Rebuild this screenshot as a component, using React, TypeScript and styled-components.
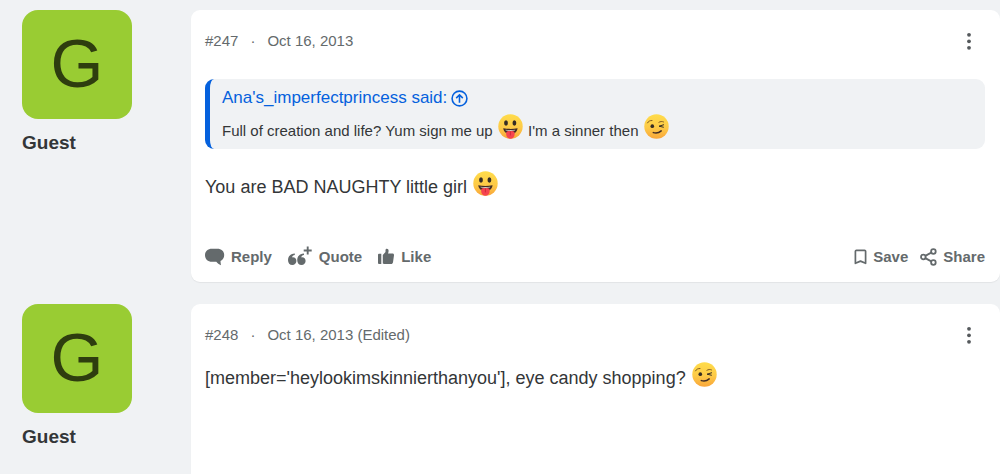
import React from "react";
import styled, { createGlobalStyle } from "styled-components";

const GlobalStyle = createGlobalStyle`
  * { box-sizing: border-box; }
  body {
    margin: 0;
    background: #f0f2f4;
    color: #333638;
    font-family: "Liberation Sans", Arial, sans-serif;
  }
`;

const Thread = styled.main`
  display: flex;
  flex-direction: column;
  gap: 22px;
  min-height: 100vh;
  padding-top: 10px;
`;

const PostRow = styled.article<{ $last?: boolean }>`
  display: grid;
  grid-template-columns: 169px minmax(0, 1fr);
  padding-left: 22px;
  flex: ${(p) => (p.$last ? "1" : "none")};
`;

const Author = styled.aside`
  display: flex;
  flex-direction: column;
  align-items: flex-start;
  gap: 12px;
`;

const Avatar = styled.div`
  width: 110px;
  height: 109px;
  border-radius: 16px;
  background: #99cc33;
  color: #2e3d0f;
  font-size: 68px;
  line-height: 106px;
  text-align: center;
`;

const AuthorName = styled.h3`
  margin: 0;
  font-size: 19px;
  line-height: 24px;
`;

const Card = styled.section<{ $open?: boolean }>`
  display: flex;
  flex-direction: column;
  padding: 20px 15px 13px 14px;
  border-radius: ${(p) => (p.$open ? "9px 9px 0 0" : "9px")};
  background: #fff;
  box-shadow: 0 1px 1px rgba(0, 0, 0, 0.06);
`;

const Header = styled.header`
  display: flex;
  align-items: center;
  justify-content: space-between;
  height: 22px;
  margin-bottom: 16px;
`;

const Meta = styled.div`
  display: flex;
  gap: 12px;
  color: #646a6c;
  font-size: 15px;
  line-height: 22px;
`;

const MoreButton = styled.button`
  display: flex;
  justify-content: center;
  width: 33px;
  padding: 0;
  border: 0;
  background: none;
  color: #55595c;
  cursor: pointer;
`;

const Quote = styled.blockquote`
  margin: 11px 0 22px;
  padding: 7px 12px 1px;
  border-left: 5px solid #0561dd;
  border-radius: 9px;
  background: #f0f2f4;
`;

const QuoteLink = styled.a`
  display: flex;
  align-items: center;
  gap: 4px;
  margin-bottom: 4px;
  color: #0561dd;
  font-size: 17px;
  line-height: 24px;
  text-decoration: none;
`;

const QuoteText = styled.p`
  margin: 0;
  font-size: 15px;
  line-height: 34px;
`;

const Message = styled.p`
  margin: 0;
  font-size: 18px;
  line-height: 32px;
`;

const Footer = styled.footer`
  display: flex;
  justify-content: space-between;
  margin-top: 42px;
`;

const Actions = styled.div<{ $gap: number }>`
  display: flex;
  gap: ${(p) => p.$gap}px;
`;

const Action = styled.button`
  display: flex;
  align-items: center;
  gap: 6px;
  height: 24px;
  padding: 0;
  border: 0;
  background: none;
  color: #646a6c;
  font: bold 15px/24px "Liberation Sans", Arial, sans-serif;
  cursor: pointer;
`;

const Smiley = styled.svg`
  width: 25px;
  height: 25px;
  margin: 0 1px;
  vertical-align: -3px;
`;

const FaceGradient = ({ id }: { id: string }) => (
  <defs>
    <linearGradient id={id} x1="0" y1="0" x2="0" y2="1">
      <stop offset="0" stopColor="#ffdc4a" />
      <stop offset="0.55" stopColor="#fdca47" />
      <stop offset="1" stopColor="#f9a63a" />
    </linearGradient>
  </defs>
);

function Tongue() {
  const id = React.useId();
  return (
    <Smiley viewBox="0 0 25 25" role="img" aria-label="Stick out tongue">
      <FaceGradient id={id} />
      <circle cx="12.5" cy="12.5" r="12.2" fill={`url(#${id})`} />
      <ellipse cx="8" cy="9" rx="1.9" ry="2.7" fill="#352c24" />
      <ellipse cx="16.4" cy="9" rx="1.9" ry="2.7" fill="#352c24" />
      <path d="M5.200 14.200c4.800.9 9.600.9 14.400 0-.3 2.600-1.700 4.600-3.800 5.200H9.200c-2.100-.6-3.700-2.600-4-5.200Z" fill="#422c24" />
      <path d="M7.400 15.700c3.300.5 6.600.5 9.900 0l-.4.900c-3 .4-6.100.4-9.100 0Z" fill="#d9cfc8" />
      <path d="M8.200 18.200c1.200-1.200 2.800-1.400 4.200-.9 1.400-.5 3-.3 4.200.9v2.300a4.200 4.200 0 0 1-8.400 0Z" fill="#f5444f" />
      <path d="M12.400 17.800v3.600" stroke="#c92b38" strokeWidth=".9" />
    </Smiley>
  );
}

function Wink() {
  const id = React.useId();
  return (
    <Smiley viewBox="0 0 25 25" role="img" aria-label="Wink">
      <FaceGradient id={id} />
      <circle cx="12.5" cy="12.5" r="12.2" fill={`url(#${id})`} />
      <ellipse cx="8.3" cy="12.2" rx="1.8" ry="1.9" fill="#352c24" />
      <path d="M3.500 8.900C4.400 7.200 6 6.400 8 6.500" fill="none" stroke="#74501d" strokeWidth=".9" strokeLinecap="round" />
      <path d="M14.900 8.300c1.500-.9 3-1.100 4.600-.4" fill="none" stroke="#74501d" strokeWidth=".9" strokeLinecap="round" />
      <path d="m19.600 10.800-4.600 1.400 4.400 1" fill="none" stroke="#352c24" strokeWidth="1" strokeLinecap="round" strokeLinejoin="round" />
      <path d="M9.300 18.600c3 .9 5.800.2 7.900-1.700" fill="none" stroke="#422c24" strokeWidth="1.500" strokeLinecap="round" />
    </Smiley>
  );
}

const MoreIcon = () => (
  <svg width="6" height="18" viewBox="0 0 6 18" fill="currentColor" aria-hidden="true">
    <circle cx="3" cy="2.8" r="1.9" />
    <circle cx="3" cy="9.3" r="1.9" />
    <circle cx="3" cy="15.8" r="1.9" />
  </svg>
);

const UpIcon = () => (
  <svg width="17" height="17" viewBox="0 0 17 17" fill="none" stroke="currentColor" strokeWidth="1.6" aria-hidden="true">
    <circle cx="8.5" cy="8.5" r="7.4" />
    <path d="M8.500 12.700V5M5.200 8.100l3.300-3.300 3.300 3.300" />
  </svg>
);

const ReplyIcon = () => (
  <svg width="20" height="18" viewBox="0 0 20 18" fill="currentColor" aria-hidden="true">
    <path d="M7 .8h5.200c4.200 0 7 2.500 7 6.200 0 2.800-1.300 4.800-3.700 5.900.1 1.500.2 2.900.5 4.300-2-.8-3.600-2-4.700-3.500H7C2.800 13.700 0 11 0 7.200 0 3.400 2.800.8 7 .8Z" />
  </svg>
);

const QuoteIcon = () => (
  <svg width="25" height="22" viewBox="0 0 25 22" fill="currentColor" aria-hidden="true">
    <path d="M6.800 7.500v1.600C5.200 9.400 4.300 10.200 4 11.400c2.600-.5 4.400 1.300 4.400 3.700 0 2.300-1.700 4-4 4-2.700 0-4.400-2-4.400-5 0-3.900 2.500-6.400 6.800-6.600Z" />
    <path d="M16 7.500v1.600c-1.600.3-2.500 1.100-2.800 2.300 2.600-.5 4.400 1.300 4.400 3.700 0 2.300-1.700 4-4 4-2.700 0-4.400-2-4.400-5 0-3.900 2.500-6.400 6.800-6.600Z" />
    <path d="M19.700.5v8M15.700 4.500h8" fill="none" stroke="currentColor" strokeWidth="1.900" />
  </svg>
);

const LikeIcon = () => (
  <svg width="17" height="18" viewBox="0 0 17 18" fill="currentColor" aria-hidden="true">
    <path d="M1 5.700h2.300V16H1a1 1 0 0 1-1-1V6.700a1 1 0 0 1 1-1Z" />
    <path d="M4.800 15.500V7L7.500 4V2.200C7.500 1.200 8 .7 8.900.7c1.100 0 1.700.8 1.700 2 0 1.100-.3 2-.6 2.800h4.500c1 0 1.600.8 1.500 1.700l-1 7c-.2 1.100-.9 1.800-2 1.800H6.200c-.6 0-1-.2-1.400-.5Z" />
  </svg>
);

const SaveIcon = () => (
  <svg width="13" height="16" viewBox="0 0 13 16" fill="none" stroke="currentColor" strokeWidth="1.7" strokeLinejoin="round" aria-hidden="true">
    <path d="M2.400 1.300h8.200c.6 0 1 .4 1 1v12l-5.100-2.200-5.100 2.200v-12c0-.6.4-1 1-1Z" />
  </svg>
);

const ShareIcon = () => (
  <svg width="17" height="18" viewBox="0 0 17 18" fill="none" stroke="currentColor" strokeWidth="1.8" aria-hidden="true">
    <circle cx="13.400" cy="3.500" r="2.300" />
    <circle cx="3.300" cy="9" r="2.300" />
    <circle cx="13.400" cy="14.500" r="2.300" />
    <path d="m5.300 7.900 6-3.300M5.300 10.100l6 3.300" />
  </svg>
);

interface PostProps {
  id: string;
  number: string;
  date: string;
  last?: boolean;
  children: React.ReactNode;
}

function Post({ id, number, date, last, children }: PostProps) {
  return (
    <PostRow id={id} $last={last}>
      <Author>
        <Avatar aria-hidden="true">G</Avatar>
        <AuthorName>Guest</AuthorName>
      </Author>
      <Card $open={last}>
        <Header>
          <Meta>
            <span>{number}</span>
            <span>·</span>
            <span>{date}</span>
          </Meta>
          <MoreButton type="button" aria-label="More options">
            <MoreIcon />
          </MoreButton>
        </Header>
        {children}
      </Card>
    </PostRow>
  );
}

export default function App() {
  return (
    <>
      <GlobalStyle />
      <Thread>
        <Post id="post-247" number="#247" date="Oct 16, 2013">
          <Quote>
            <QuoteLink href="#post-247">
              Ana's_imperfectprincess said: <UpIcon />
            </QuoteLink>
            <QuoteText>
              Full of creation and life? Yum sign me up <Tongue /> I'm a sinner then <Wink />
            </QuoteText>
          </Quote>
          <Message>
            You are BAD NAUGHTY little girl <Tongue />
          </Message>
          <Footer>
            <Actions $gap={16}>
              <Action type="button"><ReplyIcon />Reply</Action>
              <Action type="button"><QuoteIcon />Quote</Action>
              <Action type="button"><LikeIcon />Like</Action>
            </Actions>
            <Actions $gap={12}>
              <Action type="button"><SaveIcon />Save</Action>
              <Action type="button"><ShareIcon />Share</Action>
            </Actions>
          </Footer>
        </Post>
        <Post id="post-248" number="#248" date="Oct 16, 2013 (Edited)" last>
          <Message>
            [member='heylookimskinnierthanyou'], eye candy shopping? <Wink />
          </Message>
        </Post>
      </Thread>
    </>
  );
}
